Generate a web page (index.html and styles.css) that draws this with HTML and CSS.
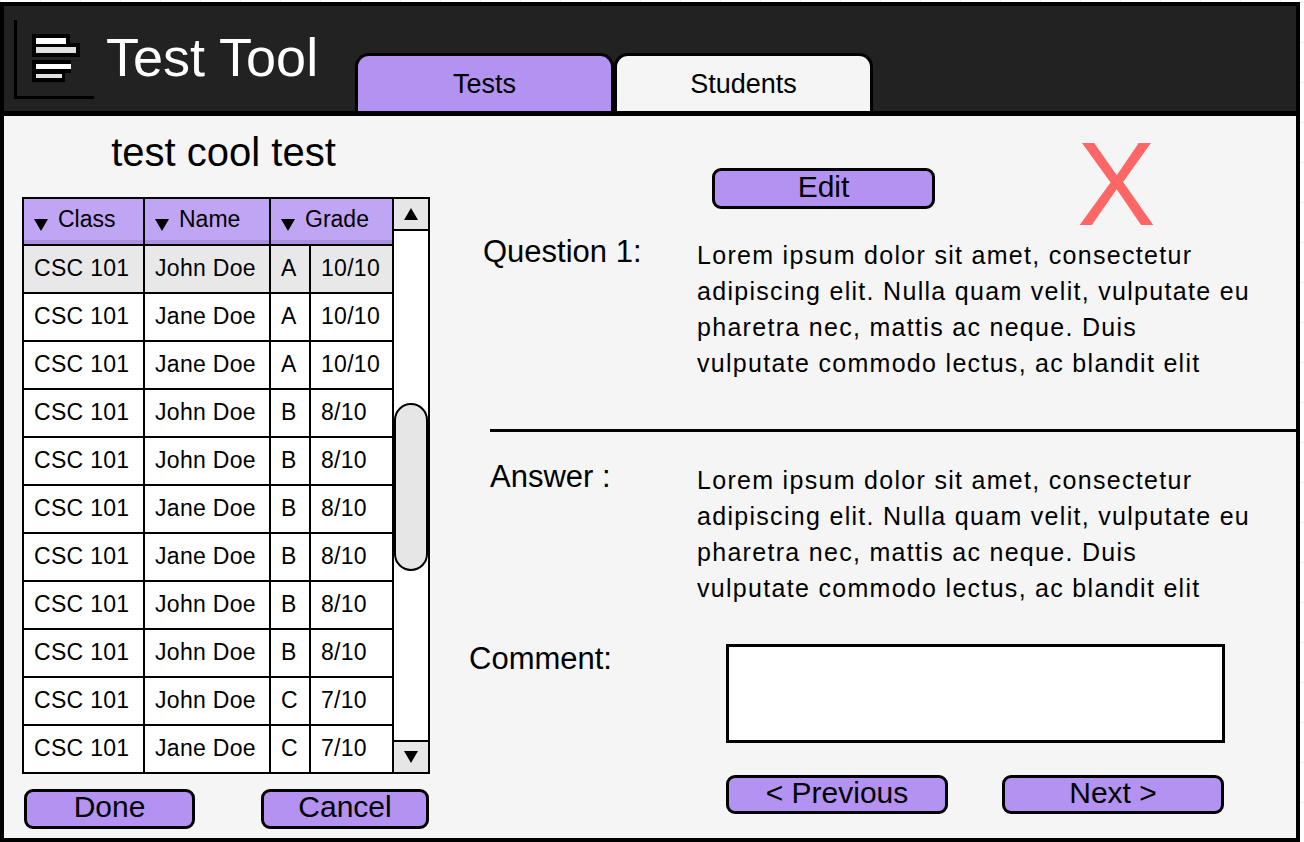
FILE: index.html
```html
<!DOCTYPE html>
<html lang="en">
<head>
<meta charset="utf-8">
<title>Test Tool</title>
<link rel="stylesheet" href="styles.css">
</head>
<body>
<div class="app">
  <header class="topbar">
    <svg class="logo" width="82" height="80" viewBox="0 0 82 80">
      <rect x="0" y="0" width="3" height="79" fill="#000"/>
      <rect x="0" y="76" width="80" height="3" fill="#000"/>
      <rect x="18" y="14" width="38" height="13" fill="#000"/>
      <rect x="18" y="23" width="48" height="14" fill="#000"/>
      <rect x="22" y="18" width="30" height="6" fill="#fff"/>
      <rect x="22" y="27" width="40" height="6" fill="#e0e0e0"/>
      <rect x="18" y="40" width="39" height="13" fill="#000"/>
      <rect x="18" y="50" width="33" height="12" fill="#000"/>
      <rect x="22" y="44" width="35" height="5" fill="#fff"/>
      <rect x="22" y="54" width="26" height="4" fill="#e0e0e0"/>
    </svg>
    <h1 class="app-title">Test Tool</h1>
    <nav class="tabs">
      <div class="tab tab-active">Tests</div>
      <div class="tab">Students</div>
    </nav>
  </header>
  <main class="content">
    <section class="left">
      <h2 class="test-name">test cool test</h2>
      <div class="table-box">
        <div class="grades">
          <div class="th"><span class="caret"></span>Class</div>
          <div class="th"><span class="caret"></span>Name</div>
          <div class="th th-grade"><span class="caret"></span>Grade</div>

          <div class="td sel">CSC 101</div><div class="td sel">John Doe</div><div class="td sel">A</div><div class="td sel">10/10</div>
          <div class="td">CSC 101</div><div class="td">Jane Doe</div><div class="td">A</div><div class="td">10/10</div>
          <div class="td">CSC 101</div><div class="td">Jane Doe</div><div class="td">A</div><div class="td">10/10</div>
          <div class="td">CSC 101</div><div class="td">John Doe</div><div class="td">B</div><div class="td">8/10</div>
          <div class="td">CSC 101</div><div class="td">John Doe</div><div class="td">B</div><div class="td">8/10</div>
          <div class="td">CSC 101</div><div class="td">Jane Doe</div><div class="td">B</div><div class="td">8/10</div>
          <div class="td">CSC 101</div><div class="td">Jane Doe</div><div class="td">B</div><div class="td">8/10</div>
          <div class="td">CSC 101</div><div class="td">John Doe</div><div class="td">B</div><div class="td">8/10</div>
          <div class="td">CSC 101</div><div class="td">John Doe</div><div class="td">B</div><div class="td">8/10</div>
          <div class="td">CSC 101</div><div class="td">John Doe</div><div class="td">C</div><div class="td">7/10</div>
          <div class="td">CSC 101</div><div class="td">Jane Doe</div><div class="td">C</div><div class="td">7/10</div>
        </div>
        <div class="scrollbar">
          <div class="sb-btn sb-up"><span class="tri-up"></span></div>
          <div class="sb-track"><div class="sb-thumb"></div></div>
          <div class="sb-btn sb-down"><span class="tri-down"></span></div>
        </div>
      </div>
      <div class="left-actions">
        <button class="btn btn-done">Done</button>
        <button class="btn btn-cancel">Cancel</button>
      </div>
    </section>

    <section class="right">
      <div class="toolbar">
        <button class="btn btn-edit">Edit</button>
        <span class="close-x">X</span>
      </div>
      <div class="qa-row">
        <div class="label label-question">Question 1:</div>
        <p class="body-text">Lorem ipsum dolor sit amet, consectetur adipiscing elit. Nulla quam velit, vulputate eu pharetra nec, mattis ac neque. Duis vulputate commodo lectus, ac blandit elit</p>
      </div>
      <div class="separator"></div>
      <div class="qa-row answer-row">
        <div class="label label-answer">Answer :</div>
        <p class="body-text">Lorem ipsum dolor sit amet, consectetur adipiscing elit. Nulla quam velit, vulputate eu pharetra nec, mattis ac neque. Duis vulputate commodo lectus, ac blandit elit</p>
      </div>
      <div class="qa-row comment-row">
        <div class="label label-comment">Comment:</div>
        <div class="comment-box"></div>
      </div>
      <div class="nav-actions">
        <button class="btn btn-nav">&lt; Previous</button>
        <button class="btn btn-nav">Next &gt;</button>
      </div>
    </section>
  </main>
</div>
</body>
</html>
```

FILE: styles.css
```css
* { box-sizing: border-box; }

body {
  margin: 0;
  background-color: #ffffff;
  background-image:
    linear-gradient(#ececec 1px, transparent 1px),
    linear-gradient(90deg, #ececec 1px, transparent 1px);
  background-size: 40px 40px;
  background-position: 0 2px, 0 0;
  font-family: "Liberation Sans", Arial, Helvetica, sans-serif;
  color: #000;
}

.app {
  width: 1300px;
  height: 840px;
  margin-top: 2px;
  border: 4px solid #000;
  background: #f5f5f5;
  display: flex;
  flex-direction: column;
}

/* ---------- header ---------- */
.topbar {
  height: 110px;
  background: #222222;
  border-bottom: 5px solid #000;
  display: flex;
  align-items: flex-start;
  padding-left: 10px;
  flex-shrink: 0;
}

.logo {
  margin-top: 14px;
  flex-shrink: 0;
}

.app-title {
  margin: 24px 0 0 10px;
  width: 249px;
  font-size: 54px;
  line-height: 1;
  font-weight: normal;
  color: #ffffff;
  white-space: nowrap;
}

.tabs {
  align-self: flex-end;
  display: flex;
}

.tab {
  width: 259px;
  height: 58px;
  border: 3px solid #000;
  border-bottom: none;
  border-radius: 14px 14px 0 0;
  background: #f5f5f5;
  display: flex;
  align-items: center;
  justify-content: center;
  padding-top: 2px;
  font-size: 27px;
}

.tab-active {
  background: #b392f2;
}

/* ---------- content ---------- */
.content {
  flex: 1;
  display: flex;
}

.left {
  width: 436px;
  padding: 12px 0 0 18px;
  flex-shrink: 0;
}

.test-name {
  margin: 0;
  width: 408px;
  padding-right: 5px;
  text-align: center;
  font-size: 40px;
  line-height: 48px;
  font-weight: normal;
}

.table-box {
  margin-top: 21px;
  width: 408px;
  height: 577px;
  border: 2px solid #000;
  display: flex;
  background: #fff;
}

.grades {
  width: 368px;
  display: grid;
  grid-template-columns: 119px 124px 38px 81px;
  grid-template-rows: 45px repeat(11, 46px);
  gap: 2px;
  background: #000;
}

.th {
  background: #c1a5f5;
  box-shadow: inset 0 -4px 0 #a98fdc;
  display: flex;
  align-items: center;
  padding: 0 0 4px 10px;
  font-size: 23px;
}

.th-grade {
  grid-column: span 2;
}

.caret {
  width: 0;
  height: 0;
  border-left: 7px solid transparent;
  border-right: 7px solid transparent;
  border-top: 12px solid #000;
  margin: 10px 10px 0 0;
}

.td {
  background: #fff;
  display: flex;
  align-items: center;
  padding: 0 0 1px 10px;
  font-size: 23px;
  letter-spacing: 0.3px;
  white-space: nowrap;
}

.td.sel {
  background: #e8e8e8;
}

.scrollbar {
  width: 36px;
  border-left: 2px solid #000;
  display: flex;
  flex-direction: column;
}

.sb-btn {
  height: 32px;
  background: #e6e6e6;
  display: flex;
  align-items: center;
  justify-content: center;
}

.sb-up { border-bottom: 2px solid #000; }
.sb-down { border-top: 2px solid #000; }

.tri-up, .tri-down {
  width: 0;
  height: 0;
  border-left: 7px solid transparent;
  border-right: 7px solid transparent;
}

.tri-up { border-bottom: 12px solid #000; }
.tri-down { border-top: 12px solid #000; }

.sb-track {
  flex: 1;
  background: #fff;
}

.sb-thumb {
  margin-top: 172px;
  width: 34px;
  height: 168px;
  border: 2px solid #000;
  border-radius: 17px;
  background: #e6e6e6;
}

.left-actions {
  margin-top: 15px;
  display: flex;
  padding-left: 2px;
  gap: 66px;
}

.btn {
  font-family: inherit;
  color: #000;
  background: #b392f2;
  border: 3px solid #000;
  border-radius: 9px;
  padding: 0 0 4px;
  font-size: 30px;
  line-height: 1;
  display: flex;
  align-items: center;
  justify-content: center;
}

.btn-done { width: 171px; height: 40px; }
.btn-cancel { width: 168px; height: 40px; }

/* ---------- right panel ---------- */
.right {
  flex: 1;
  display: flex;
  flex-direction: column;
}

.toolbar {
  height: 121px;
  display: flex;
  align-items: flex-start;
}

.btn-edit {
  margin: 52px 0 0 272px;
  width: 223px;
  height: 41px;
}

.close-x {
  margin: 9px 0 0 142px;
  font-size: 118px;
  line-height: 1;
  height: 118px;
  color: #ff6666;
}

.qa-row {
  display: grid;
  grid-template-columns: 257px 560px;
  align-items: start;
}

.label {
  font-size: 31px;
  line-height: 30px;
}

.label-question { padding-left: 43px; }
.label-answer { padding-left: 50px; }
.label-comment { padding-left: 29px; }

.body-text {
  margin: 0;
  font-size: 25px;
  line-height: 36px;
  letter-spacing: 1.3px;
}

.separator {
  margin: 48px 0 0 50px;
  height: 3px;
  background: #000;
}

.answer-row { margin-top: 30px; }

.comment-row { margin-top: 38px; }

.comment-box {
  margin-left: 29px;
  width: 499px;
  height: 99px;
  border: 3px solid #000;
  background: #fff;
}

.nav-actions {
  margin: 32px 0 0 286px;
  display: flex;
  gap: 54px;
}

.btn-nav {
  width: 222px;
  height: 39px;
}
```
